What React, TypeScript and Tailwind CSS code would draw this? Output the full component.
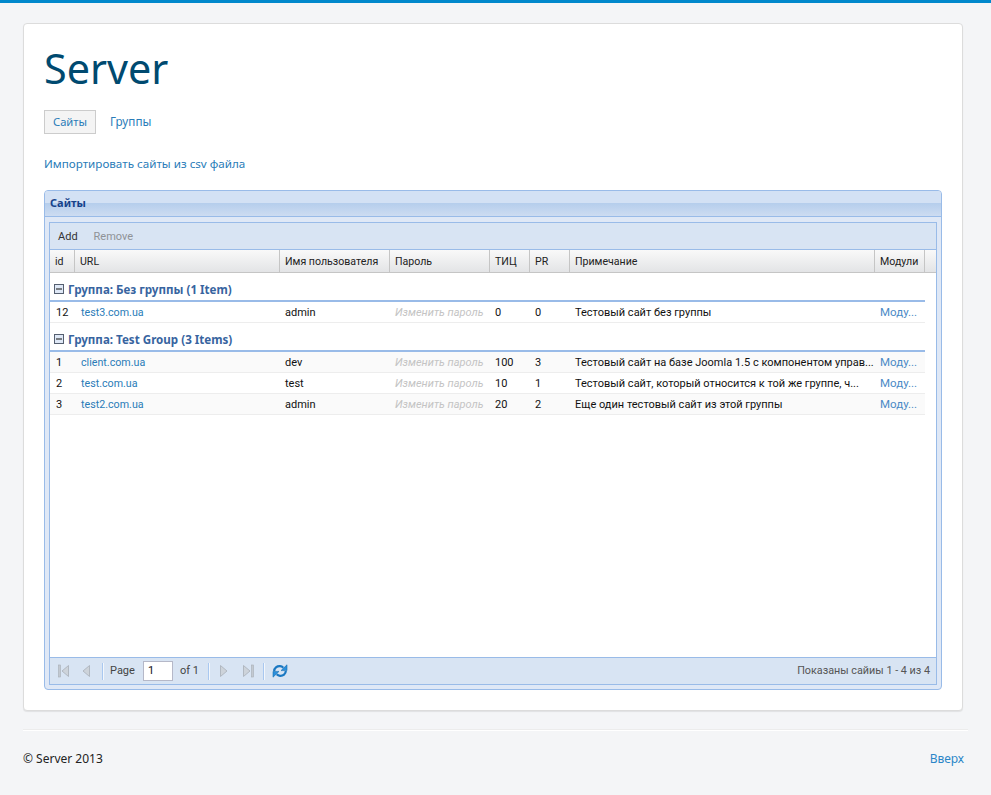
import type { ReactNode } from "react";

const cols = "grid grid-cols-[25px_205px_110px_100px_40px_40px_305px_50px]";

function HeadCell({ children }: { children?: ReactNode }) {
  return <div className="flex items-center overflow-hidden whitespace-nowrap border-r border-[#c5c5c5] pl-[5px] pt-[1px]">{children}</div>;
}

function Group({ title }: { title: string }) {
  return (
    <div className="flex h-[29px] w-[875px] items-end border-b-2 border-[#99bbe8] pl-[4px] font-['Noto_Sans',sans-serif] text-[11.6px] font-bold leading-[20px] text-[#3764a0]">
      <svg width="10" height="10" viewBox="0 0 10 10" className="mb-[6px] mr-[4px]">
        <rect x="0.5" y="0.5" width="9" height="9" fill="#dfe8f6" stroke="#555f70" />
        <path d="M2 5h6" stroke="#333" strokeWidth="1.2" />
      </svg>
      {title}
    </div>
  );
}

type R = { id: string; url: string; user: string; t: string; pr: string; note: string; alt?: boolean };

function Row({ id, url, user, t, pr, note, alt }: R) {
  return (
    <div className={`${cols} h-[21px] w-[875px] items-center whitespace-nowrap border-b border-[#ededed] pt-[2px] text-[11px] text-[#111] ${alt ? "bg-[#fafafa]" : "bg-white"}`}>
      <div className="pl-[6px]">{id}</div>
      <div className="pl-[6px] text-[10.7px] text-[#2a7cb8]">{url}</div>
      <div className="pl-[5px]">{user}</div>
      <div className="pl-[5px] italic text-[#c4c4c4]">Изменить пароль</div>
      <div className="pl-[5px]">{t}</div>
      <div className="pl-[5px]">{pr}</div>
      <div className="pl-[5px]">{note}</div>
      <div className="pl-[5px] text-[11.5px] text-[#4a8ac6]">Моду...</div>
    </div>
  );
}

function Sep({ l, r }: { l: string; r: string }) {
  return <span className={`${l} ${r} h-[17px] w-px bg-[#a9c8f0] shadow-[1px_0_0_#f3f7fc]`} />;
}

function Nav({ bar, flip }: { bar?: boolean; flip?: boolean }) {
  return (
    <svg width="12" height="14" viewBox="0 0 12 14" className={flip ? "-scale-x-100" : ""}>
      {bar && <rect x="0.5" y="1" width="2" height="12" fill="#c3c9d1" stroke="#a7adb6" strokeWidth="0.6" />}
      <path d="M10.5 1.5L4 7l6.5 5.5z" fill="#cdd3da" stroke="#a8aeb7" strokeWidth="0.8" />
    </svg>
  );
}

export default function App() {
  return (
    <div className="relative h-[795px] w-[991px] overflow-hidden border-t-[3px] border-[#0088cc] bg-[#f4f5f7] px-[23px] pt-[20px] font-['Roboto',sans-serif]">
      <div className="h-[688px] w-[940px] rounded-[4px] border border-[#dcdcdc] bg-white px-[20px] pt-[16px] shadow-[0_1px_1px_rgba(0,0,0,0.08)]">
        <h1 className="h-[54px] font-['Noto_Sans',sans-serif] text-[41.3px] font-normal leading-[56px] text-[#004a70]">Server</h1>
        <div className="mt-[16px] flex h-[24px] items-center font-['Noto_Sans',sans-serif] text-[11.7px] text-[#2a7cb8]">
          <div className="flex h-[24px] w-[52px] items-center justify-center border border-[#cccccc] bg-[#f4f4f4] text-[11.2px]">Сайты</div>
          <div className="ml-[14px]">Группы</div>
        </div>
        <div className="mt-[20px] h-[19px] font-['Noto_Sans',sans-serif] text-[11.65px] leading-[19px] text-[#2a7cb8]">Импортировать сайты из csv файла</div>

        <div className="mt-[17px] h-[500px] w-[898px] rounded-[4px] border border-[#99bbe8] bg-[#dfe8f6] text-[11px]">
          <div className="h-[26px] rounded-t-[3px] border-b border-[#99bbe8] bg-[linear-gradient(#d3e1f4_0,#d3e1f4_46%,#b4cdec_46%,#cddcf1_100%)] pl-[5px] font-['Noto_Sans',sans-serif] text-[11px] font-bold leading-[23px] text-[#15428b]">
            Сайты
          </div>
          <div className="mx-[4px] mt-[5px] flex h-[463px] w-[888px] flex-col border border-[#99bbe8] bg-white">
            <div className="flex h-[27px] items-center border-b border-[#99bbe8] bg-[#d8e4f3] pl-[8px] pt-[2px] text-[11px]">
              <span className="text-[#333]">Add</span>
              <span className="ml-[16px] text-[#8f9296]">Remove</span>
            </div>
            <div className={`${cols} h-[23px] w-full border-b border-[#c5c5c5] bg-[linear-gradient(#f9f9f9,#e3e4e6)] text-[10.6px] text-[#222]`}>
              <HeadCell>id</HeadCell>
              <HeadCell>URL</HeadCell>
              <HeadCell>Имя пользователя</HeadCell>
              <HeadCell>Пароль</HeadCell>
              <HeadCell>ТИЦ</HeadCell>
              <HeadCell>PR</HeadCell>
              <HeadCell>Примечание</HeadCell>
              <HeadCell>Модули</HeadCell>
            </div>
            <div className="flex-1">
              <Group title="Группа: Без группы (1 Item)" />
              <Row id="12" url="test3.com.ua" user="admin" t="0" pr="0" note="Тестовый сайт без группы" />
              <Group title="Группа: Test Group (3 Items)" />
              <Row id="1" url="client.com.ua" user="dev" t="100" pr="3" alt note="Тестовый сайт на базе Joomla 1.5 с компонентом управ..." />
              <Row id="2" url="test.com.ua" user="test" t="10" pr="1" note="Тестовый сайт, который относится к той же группе, ч..." />
              <Row id="3" url="test2.com.ua" user="admin" t="20" pr="2" alt note="Еще один тестовый сайт из этой группы" />
            </div>
            <div className="flex h-[27px] items-center border-t border-[#99bbe8] bg-[#d8e4f3] pl-[8px] pr-[6px] text-[11px] text-[#444]">
              <Nav bar />
              <span className="w-[9px]" />
              <Nav />
              <Sep l="ml-[11px]" r="mr-[7px]" />
              <span className="w-[24px] pt-[1px]">Page</span>
              <span className="ml-[9px] flex h-[20px] w-[30px] items-center border border-[#b5b8c8] bg-white pl-[4px] text-[#111]">1</span>
              <span className="ml-[7px] w-[20px] pt-[1px]">of 1</span>
              <Sep l="ml-[8px]" r="mr-[10px]" />
              <Nav flip />
              <span className="w-[11px]" />
              <Nav bar flip />
              <Sep l="ml-[9px]" r="mr-[8px]" />
              <svg width="16" height="16" viewBox="0 0 16 16" fill="none">
                <path d="M2.2 8.2C2.2 5 5 3 8 3.200c1.400.1 2.500.7 3.300 1.500" stroke="#1a78c2" strokeWidth="2.200" />
                <path d="M9 7.600h6V1.800z" fill="#2a8fdc" stroke="#1a6fb0" strokeWidth="0.6" />
                <path d="M13.800 8c0 3-2.800 5-5.800 4.800-1.400-.1-2.500-.7-3.300-1.500" stroke="#1a78c2" strokeWidth="2.200" />
                <path d="M7 8.400H1v5.800z" fill="#2a8fdc" stroke="#1a6fb0" strokeWidth="0.6" />
              </svg>
              <span className="ml-auto pt-[1px] text-[10.8px] text-[#555]">Показаны сайиы 1 - 4 из 4</span>
            </div>
          </div>
        </div>
      </div>
      <div className="mt-[18px] border-t border-[#ececec] shadow-[0_1px_0_#fff]" />
      <div className="mt-[20px] flex w-[941px] justify-between font-['Noto_Sans',sans-serif] text-[12px] leading-[18px] text-[#222]">
        <span>© Server 2013</span>
        <span className="text-[#2a86c8]">Вверх</span>
      </div>
    </div>
  );
}
